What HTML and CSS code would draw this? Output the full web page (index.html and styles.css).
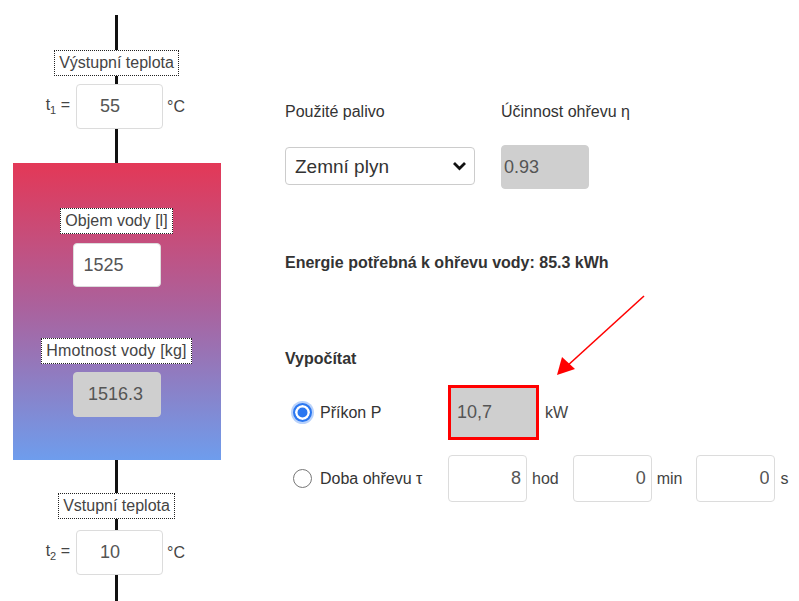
FILE: index.html
```html
<!DOCTYPE html>
<html lang="cs">
<head>
    <meta charset="UTF-8">
    <meta name="viewport" content="width=device-width, initial-scale=1.0">
    <title>Ohřev vody</title>
    <link rel="stylesheet" href="styles.css">
</head>
<body>
    <div class="page">
        <div class="heater">
            <div class="pipe pipe-1"></div>
            <div class="tag">Výstupní teplota</div>
            <div class="pipe pipe-2"></div>
            <div class="temp-row">
                <span class="temp-name">t<sub>1</sub> =</span>
                <input type="text" class="field temp-field" value="55">
                <span class="temp-unit">°C</span>
            </div>
            <div class="pipe pipe-3"></div>
            <div class="tank">
                <div class="tag">Objem vody [l]</div>
                <input type="text" class="field tank-field" value="1525">
                <div class="tag tag-mass">Hmotnost vody [kg]</div>
                <input type="text" class="field tank-field readonly center" value="1516.3" readonly>
            </div>
            <div class="pipe pipe-4"></div>
            <div class="tag">Vstupní teplota</div>
            <div class="pipe pipe-5"></div>
            <div class="temp-row">
                <span class="temp-name">t<sub>2</sub> =</span>
                <input type="text" class="field temp-field" value="10">
                <span class="temp-unit">°C</span>
            </div>
            <div class="pipe pipe-6"></div>
        </div>

        <div class="calc">
            <div class="fuel-row">
                <div class="fuel-col">
                    <label class="caption">Použité palivo</label>
                    <div class="select-wrap">
                        <select class="fuel-select">
                            <option>Zemní plyn</option>
                            <option>Elektřina</option>
                            <option>Propan</option>
                        </select>
                        <svg class="chevron" width="15" height="10" viewBox="0 0 15 10">
                            <path d="M2 2 L7.5 7.5 L13 2" fill="none" stroke="#111" stroke-width="2.8"/>
                        </svg>
                    </div>
                </div>
                <div class="eff-col">
                    <label class="caption">Účinnost ohřevu η</label>
                    <input type="text" class="field readonly eff-field" value="0.93" readonly>
                </div>
            </div>

            <div class="energy">Energie potřebná k ohřevu vody: 85.3 kWh</div>

            <div class="heading">Vypočítat</div>

            <div class="mode-row mode-power">
                <input type="radio" name="mode" class="radio" checked>
                <span class="mode-label">Příkon P</span>
                <input type="text" class="field readonly power-field" value="10,7" readonly>
                <span class="unit">kW</span>
            </div>

            <div class="mode-row mode-time">
                <input type="radio" name="mode" class="radio">
                <span class="mode-label">Doba ohřevu τ</span>
                <input type="text" class="field time-field" value="8">
                <span class="unit">hod</span>
                <input type="text" class="field time-field" value="0">
                <span class="unit">min</span>
                <input type="text" class="field time-field" value="0">
                <span class="unit">s</span>
            </div>
        </div>

        <svg class="arrow" width="799" height="601" viewBox="0 0 799 601">
            <line x1="644" y1="296" x2="566" y2="367" stroke="#ff0000" stroke-width="1.6"/>
            <polygon points="557,375 562,357 575,369" fill="#ff0000"/>
        </svg>
    </div>
</body>
</html>
```

FILE: styles.css
```css
body {
    margin: 0;
    font-family: "Liberation Sans", Arial, sans-serif;
    color: #333;
    background-color: #fff;
}
.page {
    position: relative;
    display: flex;
    height: 601px;
    overflow: hidden;
}

/* left: heater diagram */
.heater {
    width: 233px;
    display: flex;
    flex-direction: column;
    align-items: center;
}
.pipe {
    width: 3px;
    background-color: #111;
}
.pipe-1 { margin-top: 15px; height: 35px; }
.pipe-2 { height: 8px; }
.pipe-3 { height: 34px; }
.pipe-4 { height: 33px; }
.pipe-5 { height: 11px; }
.pipe-6 { flex: 1; }
.tag {
    border: 1px dotted #222;
    background-color: #fff;
    padding: 2px 4px;
    font-size: 16px;
    line-height: 20px;
    color: #444;
    white-space: nowrap;
}
.temp-row {
    display: flex;
    align-items: center;
    width: 233px;
    font-size: 16px;
    color: #444;
}
.temp-name {
    width: 70px;
    text-align: right;
    padding-right: 6px;
}
.temp-name sub {
    font-size: 11px;
}
.temp-unit {
    padding-left: 4px;
}
.field {
    box-sizing: border-box;
    border: 1px solid #dcdcdc;
    border-radius: 4px;
    background-color: #fff;
    font-family: "Liberation Sans", Arial, sans-serif;
    font-size: 18px;
    color: #555;
    outline: none;
}
.temp-field {
    width: 87px;
    height: 45px;
    padding-left: 23px;
}
.tank {
    box-sizing: border-box;
    width: 208px;
    height: 297px;
    padding-top: 45px;
    display: flex;
    flex-direction: column;
    align-items: center;
    background: linear-gradient(#e33857, #a9639f 50%, #6e9ded);
}
.tank-field {
    width: 88px;
    height: 44px;
    margin-top: 9px;
    padding-left: 10px;
}
.tag-mass {
    margin-top: 51px;
    letter-spacing: 0.2px;
}
.readonly {
    background-color: #cfcfcf;
    border-color: #cfcfcf;
}
.center {
    text-align: center;
    padding-left: 0;
    margin-top: 8px;
    height: 45px;
}

/* right: calculation */
.calc {
    padding-left: 52px;
    padding-top: 102px;
    font-size: 16px;
}
.fuel-row {
    display: flex;
}
.fuel-col {
    width: 190px;
    margin-right: 26px;
    display: flex;
    flex-direction: column;
}
.eff-col {
    display: flex;
    flex-direction: column;
}
.caption {
    line-height: 20px;
    color: #333;
}
.select-wrap {
    position: relative;
    margin-top: 25px;
}
.fuel-select {
    appearance: none;
    width: 190px;
    height: 38px;
    padding-left: 9px;
    border: 1px solid #ccc;
    border-radius: 4px;
    background-color: #fff;
    font-family: "Liberation Sans", Arial, sans-serif;
    font-size: 19px;
    color: #333;
}
.chevron {
    position: absolute;
    right: 8px;
    top: 14px;
}
.eff-field {
    width: 88px;
    height: 44px;
    margin-top: 23px;
    padding-left: 2px;
}
.energy {
    margin-top: 64px;
    font-weight: bold;
    line-height: 20px;
}
.heading {
    margin-top: 76px;
    font-weight: bold;
    line-height: 20px;
}
.mode-row {
    display: flex;
    align-items: center;
}
.mode-power {
    margin-top: 16px;
}
.mode-time {
    margin-top: 15px;
}
.radio {
    appearance: none;
    box-sizing: border-box;
    width: 19px;
    height: 19px;
    margin: 0 0 0 8px;
    border: 1.5px solid #777;
    border-radius: 50%;
    background-color: #fff;
}
.radio:checked {
    border: 2px solid #2b77f0;
    background-color: #2b77f0;
    box-shadow: inset 0 0 0 2.5px #fff, 0 0 0 2px #b9d2fb;
}
.mode-label {
    width: 128px;
    margin-left: 8px;
}
.power-field {
    width: 91px;
    height: 55px;
    border: 3px solid #f00;
    border-radius: 0;
    padding-left: 6px;
}
.unit {
    margin-left: 6px;
    color: #444;
}
.time-field {
    width: 79px;
    height: 47px;
    text-align: right;
    padding-right: 5px;
}
.mode-time .unit {
    margin-left: 5px;
    margin-right: 14px;
}
.arrow {
    position: absolute;
    left: 0;
    top: 0;
    pointer-events: none;
}
```
